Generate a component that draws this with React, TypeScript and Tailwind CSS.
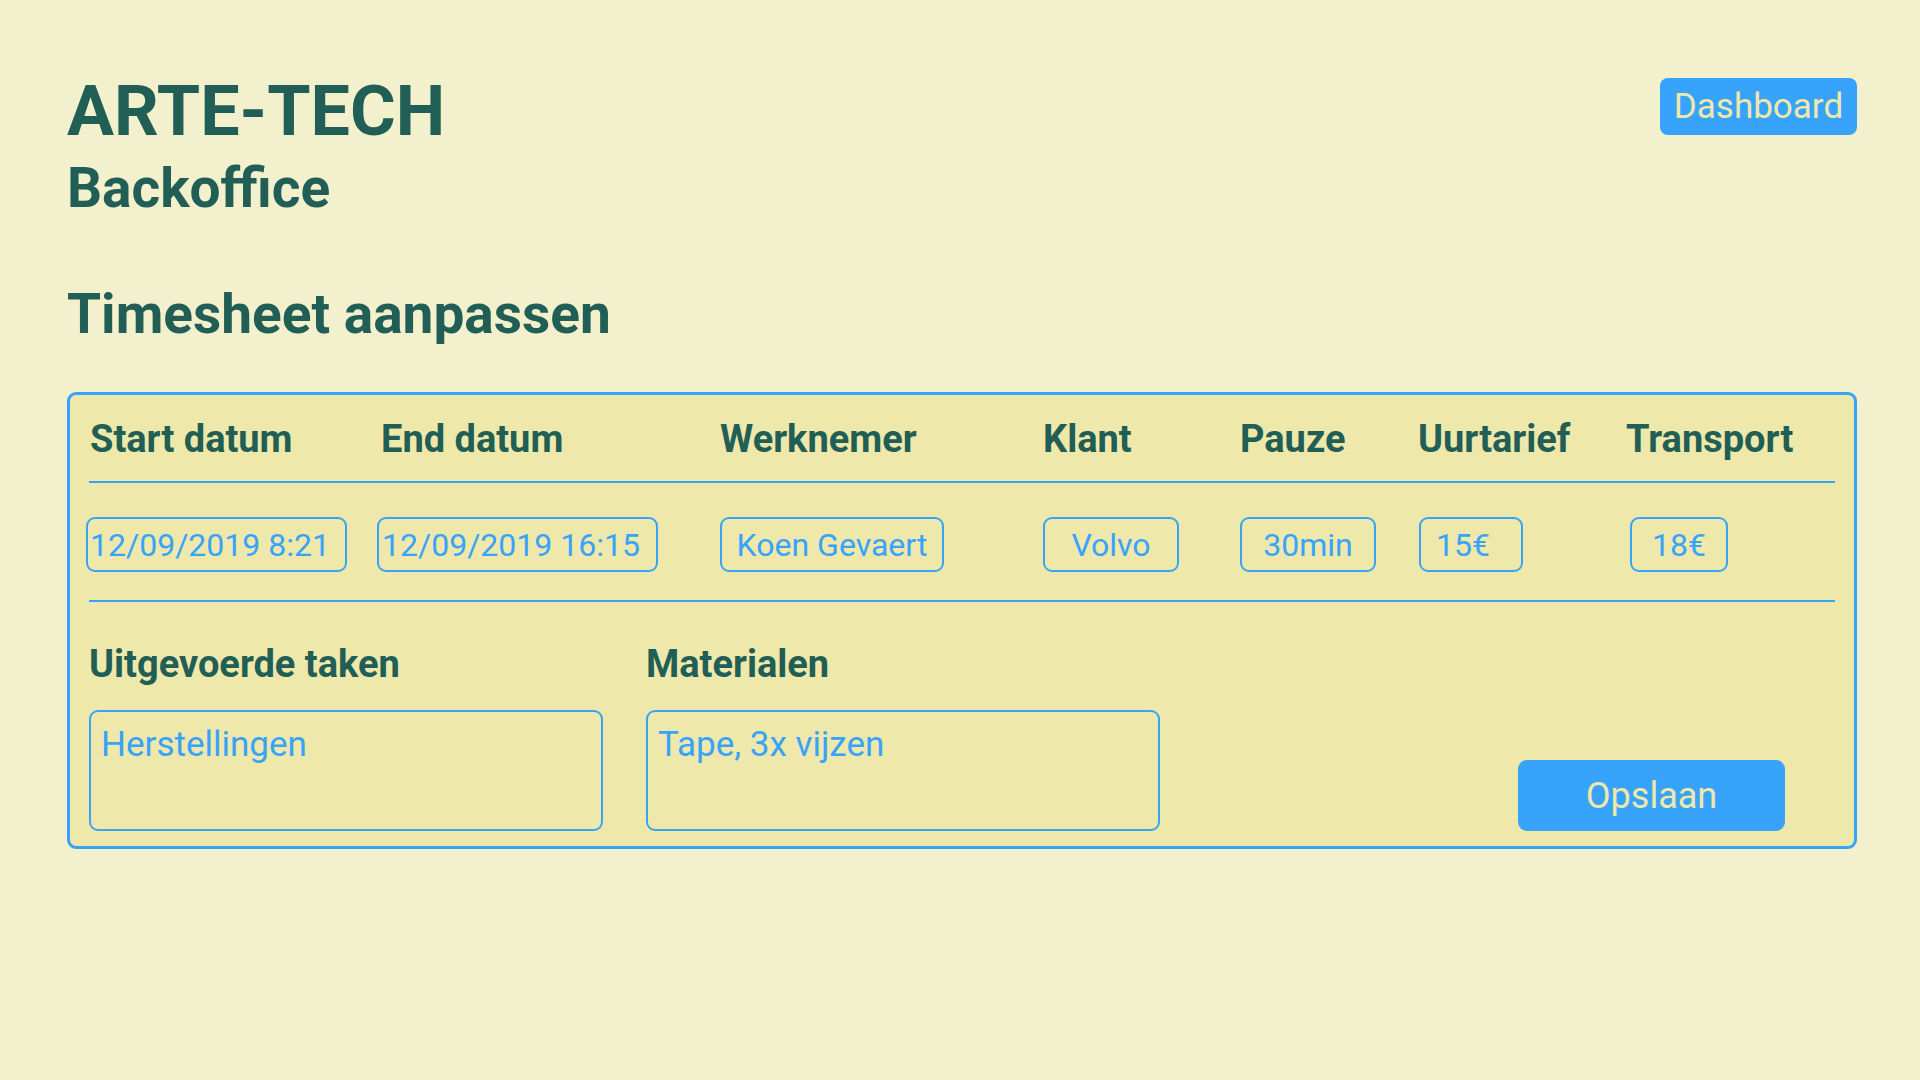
import { FC } from "react";

const fields = [
    { label: 'Start datum', value: '12/09/2019 8:21', input: 'w-[261px] -ml-[3px] text-left pl-[2px]', head: 'ml-[1px]' },
    { label: 'End datum', value: '12/09/2019 16:15', input: 'w-[281px] text-left pl-[3px]', head: 'ml-[4px]' },
    { label: 'Werknemer', value: 'Koen Gevaert', input: 'w-[224px] text-center', head: '' },
    { label: 'Klant', value: 'Volvo', input: 'w-[136px] text-center', head: '' },
    { label: 'Pauze', value: '30min', input: 'w-[136px] text-center', head: '' },
    { label: 'Uurtarief', value: '15€', input: 'w-[104px] ml-[1px] text-left pl-[15px]', head: '' },
    { label: 'Transport', value: '18€', input: 'w-[98px] ml-[4px] text-center', head: '' },
];

const Divider: FC = () => <div className="h-[2px] bg-[#38a3fb]" />;

const App: FC = () => {
    return (
        <div className="min-h-screen bg-[#f3f0cd] pl-[67px] pr-[63px] pt-[76px] text-[#215e55] font-['Roboto',sans-serif]">
            <div className="flex items-start justify-between">
                <div>
                    <h1 className="text-[70px] font-bold leading-none">ARTE-TECH</h1>
                    <h2 className="mt-[15px] text-[55px] font-bold leading-none">Backoffice</h2>
                </div>
                <button className="mt-[2px] flex h-[57px] w-[197px] items-center justify-center rounded-lg bg-[#38a3fb] text-[35px] leading-none text-[#eee8aa]">
                    Dashboard
                </button>
            </div>

            <h2 className="mt-[71px] text-[55px] font-bold leading-none">Timesheet aanpassen</h2>

            <div className="mt-[50px] rounded-[9px] border-[3px] border-[#38a3fb] bg-[#eee8aa] px-[19px] pb-[15px]">
                {/* kolomkoppen */}
                <div className="grid grid-cols-[288px_343px_323px_197px_178px_208px_1fr] pt-[25px] pb-[23px]">
                    {fields.map(f => (
                        <div key={f.label} className={`text-[38px] font-bold leading-none ${f.head}`}>{f.label}</div>
                    ))}
                </div>
                <Divider />
                <div className="grid grid-cols-[288px_343px_323px_197px_178px_208px_1fr] pt-[34px] pb-[28px]">
                    {fields.map(f => (
                        <div key={f.label}>
                            <input
                                readOnly
                                defaultValue={f.value}
                                className={`h-[55px] rounded-[9px] border-2 border-[#38a3fb] bg-transparent text-[32px] text-[#38a3fb] outline-none ${f.input}`}
                            />
                        </div>
                    ))}
                </div>
                <Divider />

                <div className="flex items-end pt-[43px]">
                    <div className="w-[514px]">
                        <div className="text-[38px] font-bold leading-none">Uitgevoerde taken</div>
                        <textarea
                            readOnly
                            defaultValue="Herstellingen"
                            className="mt-[27px] block h-[121px] w-full resize-none rounded-[9px] border-2 border-[#38a3fb] bg-transparent px-[10px] pt-[7px] text-[35px] text-[#38a3fb] outline-none"
                        />
                    </div>
                    <div className="ml-[43px] w-[514px]">
                        <div className="text-[38px] font-bold leading-none">Materialen</div>
                        <textarea
                            readOnly
                            defaultValue="Tape, 3x vijzen"
                            className="mt-[27px] block h-[121px] w-full resize-none rounded-[9px] border-2 border-[#38a3fb] bg-transparent px-[10px] pt-[7px] text-[35px] text-[#38a3fb] outline-none"
                        />
                    </div>
                    <button className="ml-[358px] flex h-[71px] w-[267px] items-center justify-center rounded-[9px] bg-[#38a3fb] text-[36px] leading-none text-[#eee8aa]">
                        Opslaan
                    </button>
                </div>
            </div>
        </div>
    );
};

export default App;
